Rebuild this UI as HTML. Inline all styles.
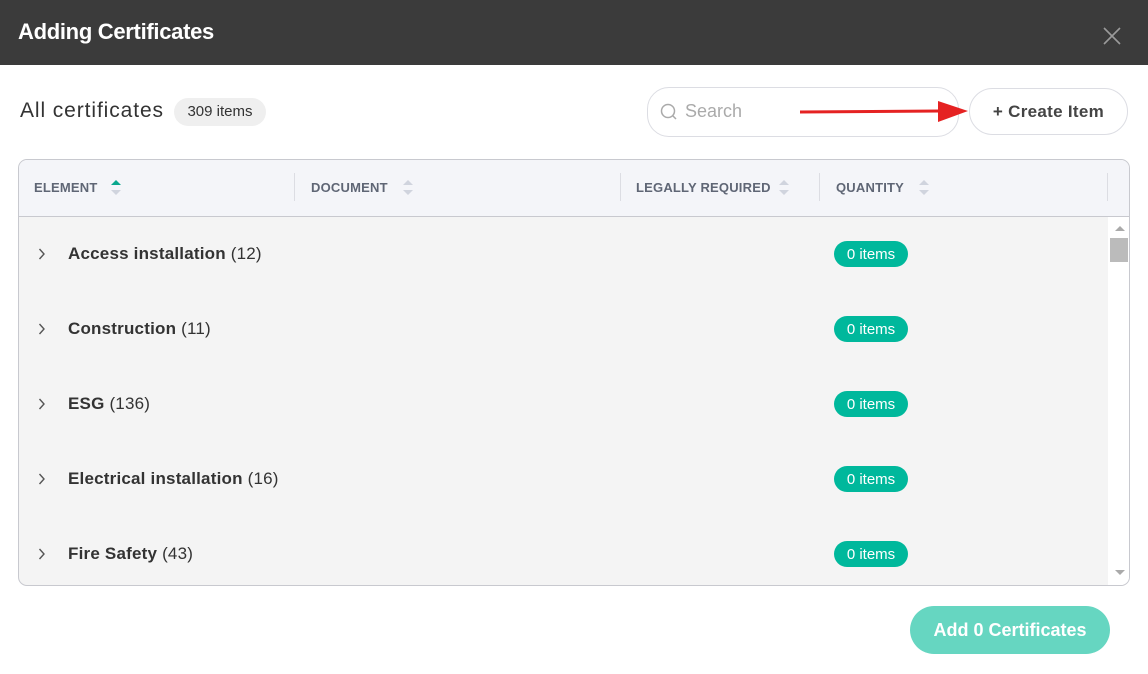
<!DOCTYPE html>
<html><head><style>
*{margin:0;padding:0;box-sizing:border-box}
body{width:1148px;height:674px;background:#fff;font-family:"Liberation Sans",sans-serif;position:relative;overflow:hidden;color:#333}
.abs{position:absolute}
.hdr{left:0;top:0;width:1148px;height:65px;background:#3b3b3b}
.title{left:18px;top:19px;font-size:22px;font-weight:bold;color:#fff;letter-spacing:-0.3px}
.th{font-size:13px;font-weight:bold;color:#5f6675;top:180px;letter-spacing:0.2px}
.sep{width:1px;height:28px;background:#dcdde3;top:173px}
.row{left:68px;font-size:17px;color:#333;letter-spacing:0.2px}
.row b{color:#333}
.pill{left:834px;width:74px;height:26px;border-radius:13px;background:#00b89c;color:#fff;font-size:15px;text-align:center;line-height:27px}
</style></head><body>
<div class="abs hdr"></div>
<div class="abs title">Adding Certificates</div>
<svg class="abs" style="left:1103px;top:27px" width="18" height="18"><path d="M1 1L17 17M17 1L1 17" stroke="#9a9a9a" stroke-width="1.6"/></svg>
<div class="abs" style="left:20px;top:99px;font-size:21px;color:#333;letter-spacing:0.9px">All certificates</div>
<div class="abs" style="left:174px;top:98px;width:92px;height:28px;border-radius:14px;background:#efefef;font-size:15px;text-align:center;line-height:28px;color:#333">309 items</div>
<div class="abs" style="left:647px;top:87px;width:312px;height:50px;border:1px solid #dcdde3;border-radius:22px"></div>
<svg class="abs" style="left:660px;top:103px" width="18" height="18"><circle cx="8" cy="8" r="6.5" fill="none" stroke="#aaa" stroke-width="1.5"/><path d="M12.5 12.5L16 16" stroke="#aaa" stroke-width="1.5"/></svg>
<div class="abs" style="left:685px;top:101px;font-size:18px;color:#aaa">Search</div>
<svg class="abs" style="left:798px;top:98px" width="172" height="28"><path d="M2 14L142 13" stroke="#e52222" stroke-width="3"/><path d="M140 3L170 13L140 24Z" fill="#e52222"/></svg>
<div class="abs" style="left:969px;top:88px;width:159px;height:47px;border:1px solid #dcdde3;border-radius:24px;font-size:17px;font-weight:bold;text-align:center;line-height:45px;color:#444;letter-spacing:0.3px">+ Create Item</div>
<div class="abs" style="left:18px;top:159px;width:1112px;height:427px;border:1px solid #c8c9cf;border-radius:9px;background:#f4f4f4;overflow:hidden">
<div class="abs" style="left:0;top:0;width:1112px;height:57px;background:#f4f5f9;border-bottom:1px solid #c8c9cf"></div>
<div class="abs" style="left:1089px;top:57px;width:22px;height:370px;background:#fff"></div>
<div class="abs" style="left:1091px;top:78px;width:18px;height:24px;background:#bbb"></div>
<svg class="abs" style="left:1096px;top:65px" width="10" height="8"><path d="M0 6L5 1L10 6Z" fill="#aaa"/></svg>
<svg class="abs" style="left:1096px;top:409px" width="10" height="8"><path d="M0 1L5 6L10 1Z" fill="#aaa"/></svg>
</div>
<div class="abs th" style="left:34px">ELEMENT</div>
<svg class="abs" style="left:110px;top:178px" width="12" height="20"><path d="M1 7L6 2L11 7Z" fill="#0aa88e"/><path d="M1 12L6 17L11 12Z" fill="#d0d4de"/></svg>
<div class="abs sep" style="left:294px"></div>
<div class="abs th" style="left:311px">DOCUMENT</div>
<svg class="abs" style="left:402px;top:178px" width="12" height="20"><path d="M1 7L6 2L11 7Z" fill="#d0d4de"/><path d="M1 12L6 17L11 12Z" fill="#d0d4de"/></svg>
<div class="abs sep" style="left:620px"></div>
<div class="abs th" style="left:636px">LEGALLY REQUIRED</div>
<svg class="abs" style="left:778px;top:178px" width="12" height="20"><path d="M1 7L6 2L11 7Z" fill="#d0d4de"/><path d="M1 12L6 17L11 12Z" fill="#d0d4de"/></svg>
<div class="abs sep" style="left:819px"></div>
<div class="abs th" style="left:836px">QUANTITY</div>
<svg class="abs" style="left:918px;top:178px" width="12" height="20"><path d="M1 7L6 2L11 7Z" fill="#d0d4de"/><path d="M1 12L6 17L11 12Z" fill="#d0d4de"/></svg>
<div class="abs sep" style="left:1107px"></div>

<svg class="abs" style="left:38px;top:248px" width="8" height="12"><path d="M1.5 1L6 6L1.5 11" fill="none" stroke="#555" stroke-width="1.4"/></svg>
<div class="abs row" style="top:244px"><b>Access installation</b> (12)</div>
<div class="abs pill" style="top:241px">0 items</div>
<svg class="abs" style="left:38px;top:323px" width="8" height="12"><path d="M1.5 1L6 6L1.5 11" fill="none" stroke="#555" stroke-width="1.4"/></svg>
<div class="abs row" style="top:319px"><b>Construction</b> (11)</div>
<div class="abs pill" style="top:316px">0 items</div>
<svg class="abs" style="left:38px;top:398px" width="8" height="12"><path d="M1.5 1L6 6L1.5 11" fill="none" stroke="#555" stroke-width="1.4"/></svg>
<div class="abs row" style="top:394px"><b>ESG</b> (136)</div>
<div class="abs pill" style="top:391px">0 items</div>
<svg class="abs" style="left:38px;top:473px" width="8" height="12"><path d="M1.5 1L6 6L1.5 11" fill="none" stroke="#555" stroke-width="1.4"/></svg>
<div class="abs row" style="top:469px"><b>Electrical installation</b> (16)</div>
<div class="abs pill" style="top:466px">0 items</div>
<svg class="abs" style="left:38px;top:548px" width="8" height="12"><path d="M1.5 1L6 6L1.5 11" fill="none" stroke="#555" stroke-width="1.4"/></svg>
<div class="abs row" style="top:544px"><b>Fire Safety</b> (43)</div>
<div class="abs pill" style="top:541px">0 items</div>

<div class="abs" style="left:910px;top:606px;width:200px;height:48px;border-radius:24px;background:#66d6c1;color:#fff;font-size:18px;font-weight:bold;text-align:center;line-height:48px">Add 0 Certificates</div>
</body></html>
